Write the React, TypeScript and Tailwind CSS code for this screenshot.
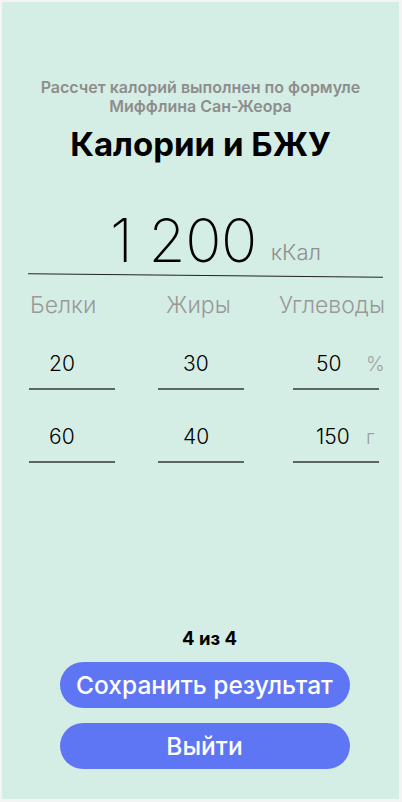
import React from 'react';

const rows = [
  { values: ['20', '30', '50'], unit: '%' },
  { values: ['60', '40', '150'], unit: 'г' },
];

const colPad = ['pl-[20px]', 'pl-[25px]', 'pl-[23px]'];

export default function App() {
  return (
    <div className="w-[402px] h-[802px] bg-[#f3f4f3] p-[2px] font-['Inter',sans-serif]">
      <div className="w-[397px] h-[797px] bg-[#d5eee5] flex flex-col">
        {/* Header */}
        <div className="pt-[76px] text-center">
          <p className="text-[16px] leading-[19px] font-semibold text-[#8d8d8d]">
            Рассчет калорий выполнен по формуле
            <br />
            Миффлина Сан-Жеора
          </p>
          <h1 className="mt-[8px] text-[33px] leading-[40px] font-bold text-black">Калории и БЖУ</h1>
        </div>

        {/* Total calories */}
        <div className="mt-[45px] flex items-end justify-center pl-[30px]">
          <span className="text-[60px] leading-[62px] font-extralight text-black tracking-[-0.5px]">1 200</span>
          <span className="ml-[14px] mb-[7px] text-[22px] leading-[24px] font-light text-[#8f8f8f]">кКал</span>
        </div>
        <div className="ml-[26px] mt-[4px] w-[355px] h-[1px] bg-[#222] rotate-[0.6deg]" />

        {/* Labels */}
        <div className="mt-[15px] ml-[28px] flex text-[23px] leading-[28px] font-light text-[#999]">
          <span className="w-[136px]">Белки</span>
          <span className="w-[113px]">Жиры</span>
          <span>Углеводы</span>
        </div>

        {/* Inputs */}
        <div className="mt-[23px] flex flex-col gap-[25px]">
          {rows.map((row) => (
            <div key={row.unit} className="ml-[27px] flex">
              {row.values.map((v, i) => (
                <div key={i} className={i === 0 ? 'w-[86px]' : i === 1 ? 'ml-[43px] w-[86px]' : 'ml-[49px] w-[86px] relative'}>
                  <div className={`${colPad[i]} h-[42px] pt-[2px] flex items-center text-[21px] font-light text-black`}>{v}</div>
                  <div className="mt-[4px] h-[2px] bg-[#5d6762]" />
                  {i === 2 && (
                    <span className="absolute left-[73px] top-[7px] text-[20px] font-light text-[#a0a0a0]">{row.unit}</span>
                  )}
                </div>
              ))}
            </div>
          ))}
        </div>

        {/* Bottom */}
        <div className="mt-auto pb-[30px] pl-[8px] flex flex-col items-center">
          <p className="pl-[10px] text-[18.5px] leading-[22px] font-bold text-black">4 из 4</p>
          <button className="mt-[13px] w-[290px] h-[46px] rounded-full bg-[#5f76f4] text-white text-[24.5px] font-medium">
            Сохранить результат
          </button>
          <button className="mt-[15px] w-[290px] h-[46px] rounded-full bg-[#5f76f4] text-white text-[24.5px] font-medium">
            Выйти
          </button>
        </div>
      </div>
    </div>
  );
}
